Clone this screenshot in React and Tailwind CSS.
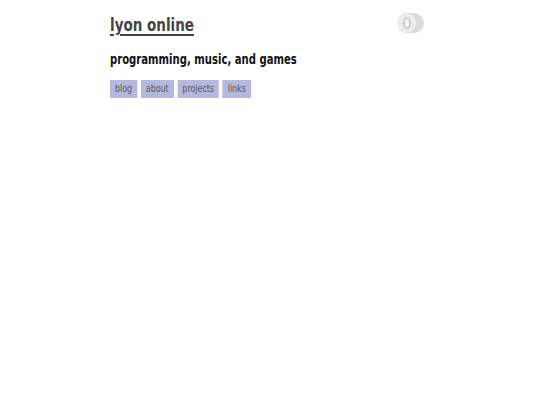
export default function App() {
  const links = ['blog', 'about', 'projects', 'links'];

  return (
    <div className="min-h-[405px] bg-white" style={{ fontFamily: '"DejaVu Sans", sans-serif' }}>
      <div className="mx-auto w-[320px] pt-[13px]">
        <header className="flex items-start justify-between">
          <div className="origin-left scale-x-[0.75]">
            <a href="#" className="text-[18px] font-bold leading-[24px] text-[#444] underline decoration-[2px] underline-offset-[3px]">
              lyon online
            </a>
          </div>
          {/* theme toggle */}
          <button className="mr-[6px] mt-[0px] flex h-[20px] w-[26px] items-center rounded-full bg-[#dcdcdc]">
            <span className="flex h-[20px] w-[18px] items-center justify-center rounded-full bg-[#eeeeee] shadow-[0_0_1px_#bbb]">
              <span className="h-[12px] w-[8px] rounded-full border-[2px] border-[#cfcfcf] bg-[#f6f6f6]"></span>
            </span>
          </button>
        </header>

        <div className="origin-left scale-x-[0.72]">
          <h2 className="mt-[11px] text-[14px] font-bold leading-[20px] text-[#111]">
            programming, music, and games
          </h2>
        </div>

        <nav className="mt-[11px] flex origin-left scale-x-[0.72] gap-[5px]">
          {links.map(l => (
            <a key={l} href="#" className="flex h-[18px] items-center bg-[#b4b8dc] px-[7px] text-[11px] text-[#555]">
              {l}
            </a>
          ))}
        </nav>
      </div>
    </div>
  );
}
